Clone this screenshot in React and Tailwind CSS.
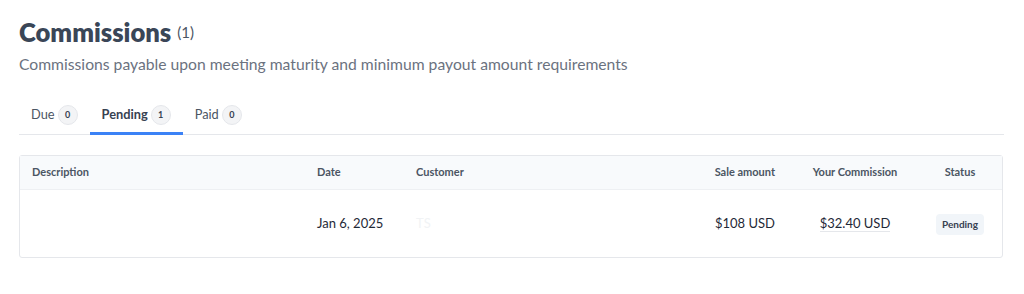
import React from "react";

const tabs = [
  { label: "Due", count: 0 },
  { label: "Pending", count: 1, active: true },
  { label: "Paid", count: 0 },
];

const cols = "grid grid-cols-[284px_99px_197px_188px_134px_1fr]";

export default function App() {
  return (
    <div className="w-[1024px] h-[294px] bg-white px-[19px] pt-[14px] font-['Lato','Noto_Sans',sans-serif] text-[#1f2937]">
      <div className="flex items-center gap-[6px]">
        <h1 className="text-[25.6px] leading-[36px] font-extrabold text-[#3a4657]">Commissions</h1>
        <span className="text-[15px] pt-[1px] text-[#4b5563]">(1)</span>
      </div>
      <p className="mt-[2px] text-[15.7px] leading-[24px] text-[#6b7280]">
        Commissions payable upon meeting maturity and minimum payout amount requirements
      </p>

      <div className="mt-[22px] flex border-b border-[#e5e7eb] mr-[1px]">
        {tabs.map((t) => (
          <div
            key={t.label}
            className={
              "flex items-center gap-[3px] pl-[12px] pr-[12px] h-[37px] border-b-[3px] -mb-px text-[12.8px] " +
              (t.active ? "border-[#3b82f6] font-bold text-[#374151]" : "border-transparent text-[#4b5563]")
            }
          >
            <span>{t.label}</span>
            <span className="flex h-[20px] w-[20px] items-center justify-center rounded-full border border-[#e5e7eb] bg-[#f3f4f6] text-[9px] font-bold text-[#374151]">
              {t.count}
            </span>
          </div>
        ))}
      </div>

      <div className="mt-[20px] mr-[2px] rounded-[3px] border border-[#e5e7eb]">
        <div className={cols + " h-[34px] items-center bg-[#f8fafc] border-b border-[#eef0f3] text-[11px] font-bold text-[#4b5563]"}>
          <div className="pl-[12px]">Description</div>
          <div className="pl-[13px]">Date</div>
          <div className="pl-[13px]">Customer</div>
          <div className="text-right pr-[13px]">Sale amount</div>
          <div className="text-center">Your Commission</div>
          <div className="text-center pr-[4px]">Status</div>
        </div>
        <div className={cols + " h-[67px] items-center pt-[1px] text-[13px] text-[#1f2937]"}>
          <div className="pl-[12px]"></div>
          <div className="pl-[13px]">Jan 6, 2025</div>
          <div className="pl-[13px] text-[#f1f3f5]">TS</div>
          <div className="text-right pr-[13px]">$108 USD</div>
          <div className="text-center">
            <span className="border-b border-[#e5e7eb]">$32.40 USD</span>
          </div>
          <div className="flex justify-center pr-[4px]">
            <span className="rounded-[4px] bg-[#f1f5f9] px-[6px] py-[3px] text-[10px] font-bold text-[#374151]">Pending</span>
          </div>
        </div>
      </div>
    </div>
  );
}
